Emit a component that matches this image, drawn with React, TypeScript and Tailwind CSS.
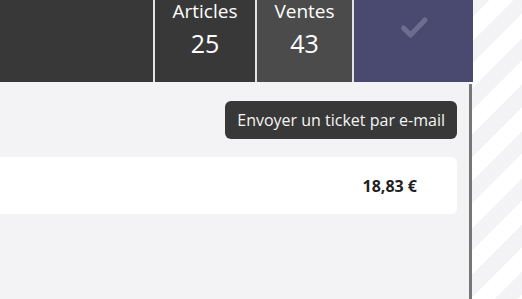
import React from "react";

export default function App() {
  return (
    <div
      className="w-[522px] h-[299px] overflow-hidden flex flex-col bg-[repeating-linear-gradient(135deg,#f3f3f5_0px,#f3f3f5_16px,#ffffff_16px,#ffffff_33px)]"
      style={{ fontFamily: '"Open Sans", "Noto Sans", sans-serif' }}
    >
      <div className="flex h-[82px] w-[473px] shrink-0">
        <div className="w-[153px] bg-[#383838]" />
        <div className="w-[2px] bg-[#e2e2e2]" />
        <div className="w-[100px] bg-[#383838] flex flex-col items-center text-white">
          <div className="text-[19px] leading-[22px]">Articles</div>
          <div className="text-[25px] leading-[30px] mt-[6px]">25</div>
        </div>
        <div className="w-[2px] bg-[#e2e2e2]" />
        <div className="w-[95px] bg-[#4b4b4b] flex flex-col items-center text-white">
          <div className="text-[19px] leading-[22px]">Ventes</div>
          <div className="text-[25px] leading-[30px] mt-[6px]">43</div>
        </div>
        <div className="w-[2px] bg-[#e2e2e2]" />
        <div className="flex-1 bg-[#4a496f] flex justify-center pt-[16px]">
          <svg width="30" height="24" viewBox="0 0 30 24" fill="none">
            <polyline
              points="4.5,12 11.5,19 26,4"
              stroke="#6e6d91"
              strokeWidth="5"
              strokeLinecap="round"
              strokeLinejoin="round"
            />
          </svg>
        </div>
      </div>
      <div className="flex flex-1">
        <div className="w-[469px] bg-[#f3f3f5] flex flex-col items-stretch pr-[12px] pt-[19px]">
          <div className="flex justify-end">
            <button className="bg-[#383838] text-[#f5f5f5] text-[16px] leading-[24px] px-[12px] py-[7px] rounded-[6px]">
              Envoyer un ticket par e-mail
            </button>
          </div>
          <div className="mt-[18px] h-[57px] bg-white rounded-r-[6px] flex items-center justify-end pr-[40px]">
            <span className="text-[16px] leading-[24px] font-bold text-[#222]">18,83 €</span>
          </div>
        </div>
        <div className="w-[3px] mt-[2px] bg-[#777777]" />
      </div>
    </div>
  );
}
